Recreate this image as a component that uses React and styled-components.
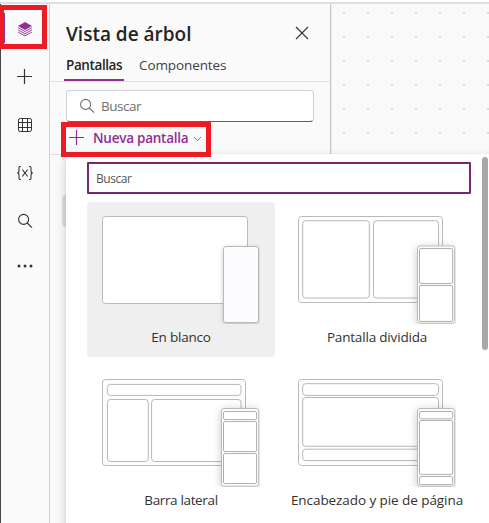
import React from "react";
import styled, { createGlobalStyle } from "styled-components";

const GlobalStyle = createGlobalStyle`
  *, *::before, *::after { box-sizing: border-box; }
  html, body { margin: 0; padding: 0; overflow: hidden; }
  body { font-family: "Open Sans", "Noto Sans", sans-serif; color: #242424; }
`;

const Shell = styled.div`
  position: relative;
  width: 489px;
  height: 523px;
  display: flex;
  flex-direction: column;
  overflow: hidden;
  background: #fafafa;
`;

const TopEdge = styled.div`
  height: 4px;
  flex: none;
  background: #fff;
  border-bottom: 2px solid #e0e0e0;
`;

const Workspace = styled.div`
  flex: 1;
  display: flex;
  min-height: 0;
  border-left: 1px solid #48464a;
`;

const Rail = styled.nav`
  width: 49px;
  flex: none;
  display: flex;
  flex-direction: column;
  padding-top: 1px;
  border-right: 1px solid #d1d1d1;
`;

const RailButton = styled.button`
  height: 48px;
  width: 48px;
  padding: 0;
  display: flex;
  align-items: center;
  justify-content: center;
  border: 0;
  background: ${(p) => (p.$active ? "linear-gradient(#8a3391, #8a3391) 3px 8px / 1px 30px no-repeat" : "none")};
  color: #333;

  svg { display: block; flex: none; }
`;

const TreePanel = styled.section`
  width: 281px;
  flex: none;
  display: flex;
  flex-direction: column;
  border-right: 1px solid #c8c8c8;
`;

const PanelHeader = styled.header`
  height: 48px;
  padding: 12px 21px 0 16px;
  display: flex;
  justify-content: space-between;
  align-items: center;

  svg { margin-bottom: 3px; }
`;

const PanelTitle = styled.h1`
  margin: 0;
  font-size: 19px;
  line-height: 28px;
  font-weight: 600;
`;

const TabList = styled.div`
  height: 30px;
  padding-left: 14px;
  display: flex;
  gap: 13px;
  border-bottom: 1px solid #e0e0e0;
`;

const Tab = styled.div`
  height: 29px;
  padding: 2px 2px 0;
  width: ${(p) => (p.$active ? "60px" : "auto")};
  font-size: 13.5px;
  line-height: 22px;
  white-space: nowrap;
  font-weight: ${(p) => (p.$active ? 600 : 400)};
  color: ${(p) => (p.$active ? "#242424" : "#424242")};
  letter-spacing: ${(p) => p.$track || "0"};
  border-bottom: 2px solid ${(p) => (p.$active ? "#8f2f96" : "transparent")};
`;

const SearchBox = styled.div`
  width: 248px;
  height: 32px;
  margin: 8px 0 0 16px;
  padding-left: 12px;
  display: flex;
  align-items: center;
  gap: 6px;
  background: #fff;
  border: 1px solid #d1d1d1;
  border-bottom-color: #616161;
  border-radius: 4px;
  font-size: 13.5px;
  letter-spacing: -0.5px;
  color: #707070;
`;

const NewScreen = styled.div`
  height: 33px;
  padding-left: 19px;
  display: flex;
  align-items: center;
  border-bottom: 1px solid #e0e0e0;
  color: #8f2f96;
  font-size: 13.5px;
  font-weight: 600;

  svg:first-child { margin-right: 8px; }
  svg:last-child { margin: 2px 0 0 5px; }
`;

const NewScreenText = styled.span`
  letter-spacing: -0.25px;
`;

const TreeRow = styled.div`
  height: 32px;
  margin: 40px 12px 0;
  border-radius: 4px;
  background: #dedede;
`;

const Canvas = styled.main`
  flex: 1;
  border-left: 1px solid #ededed;
  background-color: #fafafa;
  background-image: conic-gradient(from 270deg at 2px 2px, #dcdcdc 25%, transparent 0);
  background-size: 24px 24px;
  background-position: 11px 8px;
`;

const Menu = styled.div`
  position: absolute;
  left: 66px;
  top: 154px;
  width: 430px;
  height: 380px;
  padding: 8px 0 0 21px;
  background: #fff;
  box-shadow: 0 4px 10px rgba(0, 0, 0, 0.18), 0 0 2px rgba(0, 0, 0, 0.08);
`;

const MenuSearch = styled.div`
  width: 384px;
  height: 32px;
  padding: 0 0 0 7px;
  border: 2px solid #742774;
  border-radius: 1px;
  font-size: 12px;
  line-height: 29px;
  color: #555;
  letter-spacing: -0.45px;
`;

const TemplateGrid = styled.div`
  display: grid;
  grid-template-columns: 188px 188px;
  grid-auto-rows: 155px;
  gap: 8px;
  margin-top: 8px;
`;

const TemplateCard = styled.div`
  padding: 14px 0 0 15px;
  border-radius: 4px;
  background: ${(p) => (p.$selected ? "#efefef" : "transparent")};

  svg { display: block; }
`;

const TemplateName = styled.div`
  margin: 3px 0 0 -15px;
  text-align: center;
  font-size: 13.5px;
  line-height: 20px;
  white-space: nowrap;
  color: #323130;
  letter-spacing: ${(p) => p.$track || "0"};
`;

const ScrollThumb = styled.div`
  position: absolute;
  left: 416px;
  top: 3px;
  width: 6px;
  height: 193px;
  border-radius: 3px;
  background: #a8a8a8;
`;

const Highlight = styled.div`
  position: absolute;
  left: ${(p) => p.$x}px;
  top: ${(p) => p.$y}px;
  width: ${(p) => p.$w}px;
  height: ${(p) => p.$h}px;
  border: 5px solid #ed1c24;
  border-left-width: ${(p) => p.$left || 5}px;
`;

const LayersIcon = () => (
  <svg width="16" height="16" viewBox="0 0 16 16" fill="none">
    <path d="M8 1 15 5 8 9 1 5Z" fill="#8f2f96" />
    <g stroke="#8f2f96" strokeWidth=".9">
      <path d="M1.1 6.7 8 10.5l6.9-3.8M1.1 8.9 8 12.7l6.9-3.8M1.1 11.1 8 14.8l6.9-3.7" />
    </g>
  </svg>
);

const PlusIcon = ({ size = 16 }) => (
  <svg width={size} height={size} viewBox="0 0 16 16" stroke="currentColor" strokeWidth="1.2">
    <path d="M7.5 0v15M0 7.5h15" />
  </svg>
);

const GridIcon = () => (
  <svg width="16" height="16" viewBox="0 0 16 16" fill="none" stroke="currentColor">
    <rect x="1.5" y="1.5" width="13" height="13" rx="1.7" />
    <path d="M5.5 1.5v13M10.5 1.5v13M1.5 5.5h13M1.5 10.5h13" />
  </svg>
);

const VariableIcon = () => (
  <svg width="18" height="16" viewBox="0 0 18 16" fill="none" stroke="currentColor" strokeWidth="1.1">
    <path d="M5 1.5H4Q3 1.5 3 2.7v3Q3 8 1.2 8 3 8 3 10.3v3q0 1.2 1 1.2h1M13 1.5h1q1 0 1 1.2v3Q15 8 16.8 8 15 8 15 10.3v3q0 1.2-1 1.2h-1M6.3 4.5l5.4 7M11.7 4.5l-5.4 7" />
  </svg>
);

const SearchIcon = () => (
  <svg width="16" height="16" viewBox="0 0 16 16" fill="none" stroke="currentColor" strokeWidth="1.1">
    <circle cx="6.6" cy="6.4" r="5" />
    <path d="m10.2 10 4.8 4.7" />
  </svg>
);

const MoreIcon = () => (
  <svg width="18" height="10" viewBox="0 0 18 10" fill="currentColor">
    <circle cx="3" cy="2" r="1.5" />
    <circle cx="9" cy="2" r="1.5" />
    <circle cx="15" cy="2" r="1.5" />
  </svg>
);

const CloseIcon = () => (
  <svg width="14" height="14" viewBox="0 0 14 14" stroke="#333" strokeWidth="1.1">
    <path d="m1 1 12 12M13 1 1 13" />
  </svg>
);

const ChevronIcon = () => (
  <svg width="9" height="6" viewBox="0 0 9 6" fill="none" stroke="currentColor" strokeWidth=".8">
    <path d="m1 1 3.5 3.5L8 1" />
  </svg>
);

/* Boxes are [left, top, right, bottom] in preview coordinates. */
const templates = [
  {
    name: "En blanco",
    track: "-0.2px",
    selected: true,
    outer: [0.5, 0.5, 145.5, 87.5],
    panes: [],
    phone: [121.5, 30.5, 156.5, 106.5],
    phonePanes: [],
  },
  {
    name: "Pantalla dividida",
    track: "-0.18px",
    outer: [0.5, 0.5, 144.5, 86.5],
    panes: [[4.7, 4.7, 71.3, 82], [75.5, 4.7, 140.5, 82]],
    phone: [119.5, 30, 156.7, 107.2],
    phonePanes: [[121.5, 32.5, 154.7, 67.5], [121.5, 69.5, 154.7, 105.4]],
  },
  {
    name: "Barra lateral",
    track: "-0.35px",
    outer: [0.5, 0.5, 143.5, 86.5],
    panes: [[5.4, 5.4, 139, 16.4], [5.4, 20.5, 46.3, 82.5], [49.6, 20.5, 139, 82.5]],
    phone: [119.5, 29.5, 156.7, 107.2],
    phonePanes: [[121.5, 32.5, 154.6, 40.5], [121.5, 42.5, 154.6, 72.5], [121.5, 74.5, 154.6, 104.5]],
  },
  {
    name: "Encabezado y pie de página",
    track: "-0.07px",
    outer: [0.5, 0.5, 144.5, 86.5],
    panes: [[4.7, 4.7, 140.5, 16.4], [4.7, 18.5, 140.5, 67.3], [4.7, 70.2, 140.5, 81.6]],
    phone: [119.5, 29.5, 156.7, 107.2],
    phonePanes: [[121.5, 32.5, 154.7, 39.8], [121.5, 41.5, 154.7, 95.4], [121.5, 97.5, 154.7, 105.6]],
  },
];

const Box = ({ b, r = 3, fill = "#fff", stroke = "#bababc", filter }) => (
  <rect x={b[0]} y={b[1]} width={b[2] - b[0]} height={b[3] - b[1]} rx={r} fill={fill} stroke={stroke} filter={filter} />
);

const Preview = ({ template: t, id }) => (
  <svg width="158" height="108" viewBox="0 0 158 108">
    <defs>
      <filter id={id} x="-50%" y="-30%" width="200%" height="160%">
        <feDropShadow dx="0" dy="1.5" stdDeviation={t.selected ? 2 : 4} floodColor="#000" floodOpacity=".22" />
      </filter>
    </defs>
    <Box b={t.outer} fill={t.selected ? "#fff" : "#fdfdff"} />
    {t.panes.map((b, i) => <Box key={i} b={b} stroke="#b8b8ba" />)}
    <Box b={t.phone} r={2.5} fill="#fcfcfe" filter={`url(#${id})`} />
    {t.phonePanes.map((b, i) => <Box key={i} b={b} r={1.5} stroke="#b0b0b2" />)}
  </svg>
);

export default function App() {
  return (
    <Shell>
      <GlobalStyle />
      <TopEdge />
      <Workspace>
        <Rail>
          <RailButton $active><LayersIcon /></RailButton>
          <RailButton><PlusIcon /></RailButton>
          <RailButton><GridIcon /></RailButton>
          <RailButton><VariableIcon /></RailButton>
          <RailButton><SearchIcon /></RailButton>
          <RailButton><MoreIcon /></RailButton>
        </Rail>
        <TreePanel>
          <PanelHeader>
            <PanelTitle>Vista de árbol</PanelTitle>
            <CloseIcon />
          </PanelHeader>
          <TabList>
            <Tab $active $track="-0.4px">Pantallas</Tab>
            <Tab $track="-0.1px">Componentes</Tab>
          </TabList>
          <SearchBox><SearchIcon />Buscar</SearchBox>
          <NewScreen>
            <PlusIcon />
            <NewScreenText>Nueva pantalla</NewScreenText>
            <ChevronIcon />
          </NewScreen>
          <TreeRow />
        </TreePanel>
        <Canvas />
      </Workspace>
      <Menu>
        <MenuSearch>Buscar</MenuSearch>
        <TemplateGrid>
          {templates.map((t, i) => (
            <TemplateCard key={t.name} $selected={t.selected}>
              <Preview template={t} id={`phone-shadow-${i}`} />
              <TemplateName $track={t.track}>{t.name}</TemplateName>
            </TemplateCard>
          ))}
        </TemplateGrid>
        <ScrollThumb />
      </Menu>
      <Highlight $x={0} $y={5} $w={47} $h={44} $left={4} />
      <Highlight $x={61} $y={122} $w={150} $h={35} />
    </Shell>
  );
}
